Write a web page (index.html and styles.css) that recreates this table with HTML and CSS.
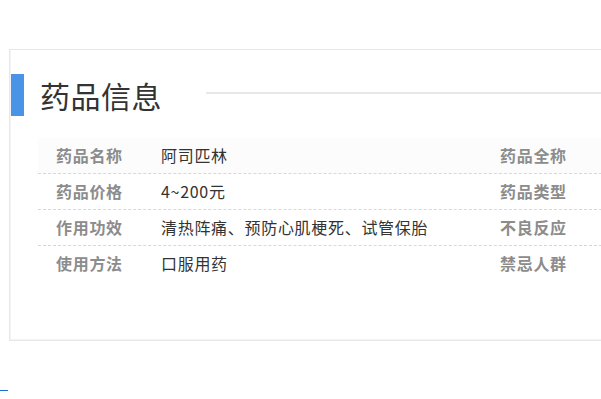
FILE: index.html
```html
<!DOCTYPE html>
<html lang="zh-CN">
<head>
<meta charset="utf-8">
<link rel="stylesheet" href="styles.css">
</head>
<body>
<div class="page">
  <section class="panel">
    <div class="head">
      <span class="bar"></span>
      <h2 class="title">药品信息</h2>
      <span class="rule"></span>
    </div>
    <div class="table">
      <div class="row first">
        <span class="lab">药品名称</span><span class="val">阿司匹林</span><span class="lab">药品全称</span>
      </div>
      <div class="row">
        <span class="lab">药品价格</span><span class="val">4~200元</span><span class="lab">药品类型</span>
      </div>
      <div class="row">
        <span class="lab">作用功效</span><span class="val">清热阵痛、预防心肌梗死、试管保胎</span><span class="lab">不良反应</span>
      </div>
      <div class="row last">
        <span class="lab">使用方法</span><span class="val">口服用药</span><span class="lab">禁忌人群</span>
      </div>
    </div>
  </section>
  <div class="foot"><span class="link"></span></div>
</div>
</body>
</html>
```

FILE: styles.css
```css
html, body {
  margin: 0;
  padding: 0;
  background: #fff;
  overflow: hidden;
  font-family: "Noto Sans CJK SC", "Noto Sans", sans-serif;
}
.page {
  padding: 49px 0 0 9px;
  width: 1200px;
}
.panel {
  box-sizing: border-box;
  width: 1100px;
  height: 292px;
  border: 1px solid #e8e8e8;
  box-shadow: inset 1px 0 0 #f4f4f4, inset 0 -1px 0 #f4f4f4;
}
.head {
  display: flex;
  align-items: center;
  margin-top: 24px;
  height: 42px;
}
.bar {
  width: 13px;
  height: 42px;
  margin-left: 1px;
  background: #4a94e8;
}
.title {
  margin: 0 0 0 16px;
  font-size: 30px;
  font-weight: 400;
  color: #333;
  line-height: 42px;
  letter-spacing: 0.5px;
}
.rule {
  flex: 1;
  height: 2px;
  margin-left: 44px;
  margin-top: -4px;
  background: #e8e8e8;
}
.table {
  margin: 22px 0 0 28px;
}
.row {
  display: grid;
  grid-template-columns: 123px 339px 200px;
  height: 35px;
  align-items: center;
  border-bottom: 1px dashed #d8d8d8;
}
.row > span {
  margin-top: -2px;
}
.row.first {
  background: #fcfcfc;
}
.row.last {
  border-bottom: none;
}
.lab {
  padding-left: 18px;
  font-size: 16px;
  font-weight: 700;
  color: #8c8c8c;
  letter-spacing: 0.7px;
}
.row .lab:last-child {
  padding-left: 0;
}
.val {
  font-size: 16px;
  color: #333;
  letter-spacing: 0.7px;
}
.foot {
  padding-top: 49px;
  margin-left: -9px;
}
.link {
  display: block;
  width: 8px;
  height: 1px;
  background: #1f6fe0;
}
```
